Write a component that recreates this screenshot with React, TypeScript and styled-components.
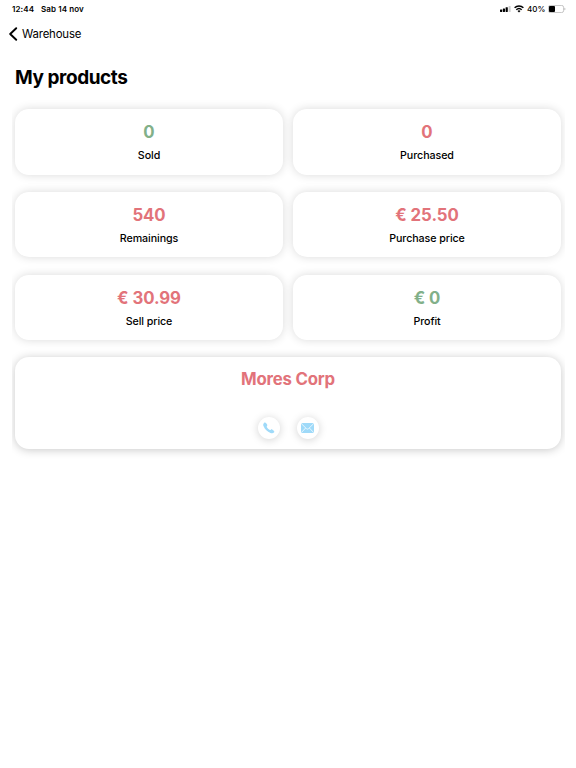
import React from 'react';
import styled, { createGlobalStyle } from 'styled-components';

const GlobalStyle = createGlobalStyle`
  * { box-sizing: border-box; }
  body { margin: 0; background: #fff; }
`;

const Screen = styled.div`
  width: 576px;
  height: 768px;
  display: flex;
  flex-direction: column;
  overflow: hidden;
  background: #fff;
  color: #000;
  font-family: Inter, 'Liberation Sans', sans-serif;
`;

const StatusBar = styled.header`
  height: 18px;
  padding: 0 10px 0 12px;
  display: flex;
  align-items: center;
  font-size: 8px;
  line-height: 18px;
  font-weight: 600;
  letter-spacing: 0.1px;
`;

const Clock = styled.span`
  width: 29px;
  letter-spacing: 0.12px;
`;

const Indicators = styled.div`
  margin-left: auto;
  display: flex;
  align-items: center;
`;

const WifiSlot = styled.span`
  display: flex;
  margin-left: 3px;
`;

const Percent = styled.span`
  width: 21px;
  margin-left: 3px;
  font-weight: 500;
`;

const NavBar = styled.nav`
  height: 33px;
  padding: 0 0 1px 9px;
  display: flex;
  align-items: center;
`;

const BackLabel = styled.span`
  margin-left: 4px;
  font-size: 11.4px;
  letter-spacing: -0.17px;
`;

const Title = styled.h1`
  height: 48px;
  margin: 0;
  padding: 13px 0 0 15px;
  font-size: 19px;
  line-height: 28px;
  font-weight: 700;
  letter-spacing: -0.43px;
`;

const Content = styled.main`
  width: 553px;
  margin-left: 12px;
  padding: 10px 4px 30px 3px;
  overflow: hidden;
`;

const Grid = styled.section`
  display: grid;
  grid-template-columns: 268px 268px;
  grid-auto-rows: 65.5px;
  gap: 17.3px 10px;
`;

const Card = styled.article`
  border-radius: 14px;
  background: #fff;
  box-shadow: 0 0 10px rgba(0, 0, 0, 0.15);
  display: flex;
  flex-direction: column;
  align-items: center;
`;

const Value = styled.div<{ $tone: 'good' | 'bad' }>`
  margin-top: 12px;
  font-size: 16.8px;
  line-height: 22px;
  font-weight: 650;
  letter-spacing: -0.05px;
  color: ${(p) => (p.$tone === 'good' ? '#82b089' : '#e2737a')};
`;

const Caption = styled.div`
  margin-top: 5px;
  font-size: 10.7px;
  line-height: 15px;
  font-weight: 500;
  letter-spacing: -0.08px;
`;

const SupplierCard = styled(Card)`
  height: 92.5px;
  margin-top: 16.5px;
  box-shadow: 0 1px 10px rgba(0, 0, 0, 0.22);
`;

const SupplierName = styled(Value)`
  margin-top: 11px;
  letter-spacing: -0.2px;
`;

const Actions = styled.div`
  display: flex;
  gap: 17px;
  margin-top: 27px;
`;

const RoundButton = styled.button`
  width: 22px;
  height: 22px;
  padding: 0;
  border: 0;
  border-radius: 50%;
  background: #fff;
  box-shadow: 0 1px 9px rgba(0, 0, 0, 0.18);
  display: flex;
  align-items: center;
  justify-content: center;
`;

const stats: { value: string; label: string; tone: 'good' | 'bad' }[] = [
  { value: '0', label: 'Sold', tone: 'good' },
  { value: '0', label: 'Purchased', tone: 'bad' },
  { value: '540', label: 'Remainings', tone: 'bad' },
  { value: '€ 25.50', label: 'Purchase price', tone: 'bad' },
  { value: '€ 30.99', label: 'Sell price', tone: 'bad' },
  { value: '€ 0', label: 'Profit', tone: 'good' },
];

const SignalIcon = () => (
  <svg width="11" height="8" viewBox="0 0 11 8">
    <rect x="0" y="4.5" width="2.2" height="2.5" rx=".4" />
    <rect x="2.8" y="3.5" width="2.2" height="3.5" rx=".4" />
    <rect x="5.6" y="2.2" width="2.2" height="4.8" rx=".4" />
    <rect x="8.6" y="1" width="2" height="6" rx=".5" fill="#ccc" />
  </svg>
);

const WifiIcon = () => (
  <svg width="10" height="8" viewBox="0 0 10 8" fill="none" stroke="#000" strokeWidth="1.45">
    <path d="M.6 2.8a6.3 6.3 0 0 1 8.8 0" />
    <path d="M2.3 4.7a3.9 3.9 0 0 1 5.4 0" />
    <path d="M5 7.5 3.5 6a2.1 2.1 0 0 1 3 0z" fill="#000" stroke="none" />
  </svg>
);

const BatteryIcon = () => (
  <svg width="18" height="8" viewBox="0 0 18 8">
    <rect x=".4" y=".4" width="15.2" height="7.2" rx="2" fill="none" stroke="#aaa" strokeWidth=".7" />
    <rect x="1" y="1" width="6" height="6" rx=".9" />
    <path d="M16.5 2.8v2.4c1.2-.5 1.2-1.9 0-2.4" fill="#aaa" />
  </svg>
);

const BackIcon = () => (
  <svg width="9" height="14" viewBox="0 0 9 14" fill="none" stroke="#000" strokeWidth="1.9" strokeLinecap="round" strokeLinejoin="round">
    <path d="M7.2 1.2 1.2 7l6 5.8" />
  </svg>
);

const PhoneIcon = () => (
  <svg width="12" height="12" viewBox="0 0 12 12">
    <path
      d="M1 .9C1.6.3 2.6.4 3 1l1.100 1.600c.4.5.3 1-.1 1.400-.4.5-.4.8-.1 1.200.7 1.100 1.500 1.900 2.600 2.600.5.3.8.3 1.300-.1.4-.4.9-.5 1.400-.1L10.800 8.700c.6.4.7 1.300.1 1.900-.9.900-2 .9-3.400.4C4.300 9.800 1.900 7.400.6 4.300 0 2.900.1 1.800 1 .9z"
      fill="#9fdaf9"
    />
  </svg>
);

const MailIcon = () => (
  <svg width="13" height="10" viewBox="0 0 13 10">
    <rect width="13" height="10" rx="1.6" fill="#9fdaf9" />
    <path d="m.5.8 4.9 4.8q1.1 1 2.2 0L12.5.8M.6 9.3l4-4.3M12.4 9.3l-4-4.3" fill="none" stroke="#fff" strokeWidth=".75" />
  </svg>
);

export default function App() {
  return (
    <>
      <GlobalStyle />
      <Screen>
        <StatusBar>
          <Clock>12:44</Clock>
          <span>Sab 14 nov</span>
          <Indicators>
            <SignalIcon />
            <WifiSlot><WifiIcon /></WifiSlot>
            <Percent>40%</Percent>
            <BatteryIcon />
          </Indicators>
        </StatusBar>
        <NavBar>
          <BackIcon />
          <BackLabel>Warehouse</BackLabel>
        </NavBar>
        <Title>My products</Title>
        <Content>
          <Grid>
            {stats.map((s) => (
              <Card key={s.label}>
                <Value $tone={s.tone}>{s.value}</Value>
                <Caption>{s.label}</Caption>
              </Card>
            ))}
          </Grid>
          <SupplierCard>
            <SupplierName $tone="bad">Mores Corp</SupplierName>
            <Actions>
              <RoundButton aria-label="Call"><PhoneIcon /></RoundButton>
              <RoundButton aria-label="Email"><MailIcon /></RoundButton>
            </Actions>
          </SupplierCard>
        </Content>
      </Screen>
    </>
  );
}
